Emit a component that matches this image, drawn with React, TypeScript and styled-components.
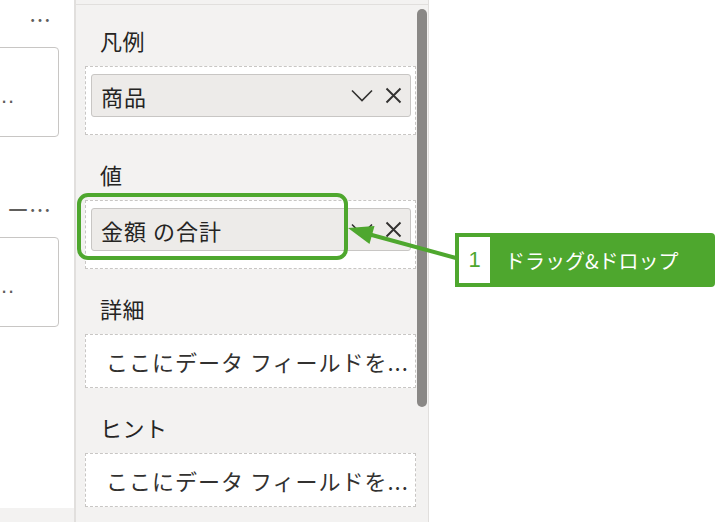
import React from 'react'
import styled, { createGlobalStyle } from 'styled-components'

const GlobalStyle = createGlobalStyle`
  html, body, #root {
    height: 100%;
  }
  body {
    margin: 0;
    background: #ffffff;
    font-family: 'Noto Sans CJK JP', 'Noto Sans', sans-serif;
    color: #252423;
  }
`

const ACCENT = '#4ea72e'

const Page = styled.div`
  position: relative;
  display: flex;
  height: 100%;
  overflow: hidden;
`

// report canvas, cut off at the left
const Canvas = styled.div`
  width: 74px;
  flex-shrink: 0;
  display: flex;
  flex-direction: column;
  overflow: hidden;
  border-right: 2px solid #e1dfdd;
`

const VisualTitle = styled.div<{ $top: number }>`
  margin-top: ${(p) => p.$top}px;
  height: 26px;
  line-height: 26px;
  font-size: 22px;
  text-align: right;
  padding-right: 23px;
  white-space: nowrap;
  color: #605e5c;
`

const VisualCard = styled.div`
  margin-top: 16px;
  margin-left: -40px;
  width: 99px;
  height: 90px;
  flex-shrink: 0;
  box-sizing: border-box;
  border: 1px solid #c8c6c4;
  border-radius: 4px;
  background: #ffffff;
  padding: 36px 0 0 40px;
  font-family: 'Liberation Sans', Arial, sans-serif;
  font-size: 22px;
  line-height: 24px;
  letter-spacing: 1px;
  color: #605e5c;
`

const CanvasFooter = styled.div`
  margin-top: auto;
  height: 14px;
  background: #f3f2f1;
`

// field wells pane
const Panel = styled.div`
  width: 352px;
  flex-shrink: 0;
  display: flex;
  flex-direction: column;
  background: #f3f2f1;
  border-right: 1px solid #e1dfdd;
`

const TopBar = styled.div`
  height: 4px;
  border-bottom: 1px solid #e1dfdd;
`

const PanelBody = styled.div`
  flex: 1;
  display: flex;
  min-height: 0;
`

const FieldList = styled.div`
  flex: 1;
  min-width: 0;
  display: flex;
  flex-direction: column;
  padding: 20px 1px 0 9px;
`

const ScrollTrack = styled.div`
  width: 11px;
  flex-shrink: 0;
  padding-top: 4px;
`

const ScrollThumb = styled.div`
  width: 10px;
  height: 398px;
  border-radius: 5px;
  background: #8a8886;
`

const Section = styled.section`
  min-width: 0;
  & + & {
    margin-top: 24px;
  }
`

const SectionLabel = styled.div`
  height: 30px;
  line-height: 30px;
  font-size: 22px;
  letter-spacing: 0.5px;
  padding-left: 15px;
  margin-bottom: 11px;
  color: #252423;
`

const Well = styled.div<{ $filled?: boolean }>`
  box-sizing: border-box;
  border: 1px dashed #c8c6c4;
  background: #ffffff;
  display: flex;
  align-items: center;
  ${(p) =>
    p.$filled
      ? `padding: 7px 4px 17px 5px;`
      : `height: 54px; padding: 0 6px 0 20px;`}
`

const WellHint = styled.div`
  flex: 1;
  min-width: 0;
  white-space: nowrap;
  font-size: 22px;
  line-height: 30px;
  letter-spacing: 1px;
  color: #323130;
`

const Pill = styled.div`
  flex: 1;
  min-width: 0;
  height: 43px;
  box-sizing: border-box;
  display: flex;
  align-items: center;
  padding: 0 8px 0 9px;
  border: 1px solid #c8c6c4;
  border-radius: 3px;
  background: #edebe9;
  font-size: 22px;
  color: #252423;
`

const PillName = styled.span`
  flex: 1;
  white-space: nowrap;
  letter-spacing: 1px;
`

const IconButton = styled.span<{ $gap?: number }>`
  display: flex;
  margin-right: ${(p) => p.$gap ?? 0}px;
`

// annotation on top of the screenshot
const Overlay = styled.svg`
  position: absolute;
  left: 0;
  top: 0;
  pointer-events: none;
`

const Callout = styled.div`
  position: absolute;
  left: 455px;
  top: 233px;
  width: 260px;
  height: 54px;
  box-sizing: border-box;
  display: flex;
  align-items: center;
  padding: 0 4px;
  background: ${ACCENT};
  border-radius: 0 4px 4px 0;
`

const StepBadge = styled.div`
  width: 31px;
  height: 46px;
  display: flex;
  align-items: center;
  justify-content: center;
  background: #ffffff;
  font-family: 'Liberation Sans', Arial, sans-serif;
  font-size: 22px;
  color: ${ACCENT};
`

const CalloutText = styled.span`
  margin-left: 15px;
  font-size: 20px;
  color: #ffffff;
  white-space: nowrap;
`

const Chevron = () => (
  <svg width="22" height="13" viewBox="0 0 22 13">
    <path d="M1 1.5 L11 11.5 L21 1.5" fill="none" stroke="#323130" strokeWidth="1.6" />
  </svg>
)

const Close = () => (
  <svg width="17" height="17" viewBox="0 0 17 17">
    <path d="M1.5 1.5 L15.5 15.5 M15.5 1.5 L1.5 15.5" fill="none" stroke="#323130" strokeWidth="1.9" />
  </svg>
)

interface FieldWellProps {
  label: string
  field?: string
}

const FieldWell: React.FC<FieldWellProps> = ({ label, field }) => (
  <Section>
    <SectionLabel>{label}</SectionLabel>
    {field ? (
      <Well $filled>
        <Pill>
          <PillName>{field}</PillName>
          <IconButton $gap={12}>
            <Chevron />
          </IconButton>
          <IconButton>
            <Close />
          </IconButton>
        </Pill>
      </Well>
    ) : (
      <Well>
        <WellHint>ここにデータ フィールドを...</WellHint>
      </Well>
    )}
  </Section>
)

const App: React.FC = () => {
  return (
    <Page>
      <GlobalStyle />
      <Canvas>
        <VisualTitle $top={5}>…</VisualTitle>
        <VisualCard>..</VisualCard>
        <VisualTitle $top={58}>ー…</VisualTitle>
        <VisualCard>..</VisualCard>
        <CanvasFooter />
      </Canvas>

      <Panel>
        <TopBar />
        <PanelBody>
          <FieldList>
            <FieldWell label="凡例" field="商品" />
            <FieldWell label="値" field="金額 の合計" />
            <FieldWell label="詳細" />
            <FieldWell label="ヒント" />
          </FieldList>
          <ScrollTrack>
            <ScrollThumb />
          </ScrollTrack>
        </PanelBody>
      </Panel>

      <Overlay width="717" height="522" viewBox="0 0 717 522">
        <rect x="79" y="195" width="267" height="63" rx="9" fill="none" stroke={ACCENT} strokeWidth="4" />
        <line x1="456" y1="258" x2="370" y2="234.5" stroke={ACCENT} strokeWidth="4" />
        <polygon points="348,228 374.5,226 369.5,244" fill={ACCENT} />
      </Overlay>

      <Callout>
        <StepBadge>1</StepBadge>
        <CalloutText>ドラッグ&amp;ドロップ</CalloutText>
      </Callout>
    </Page>
  )
}

export default App
